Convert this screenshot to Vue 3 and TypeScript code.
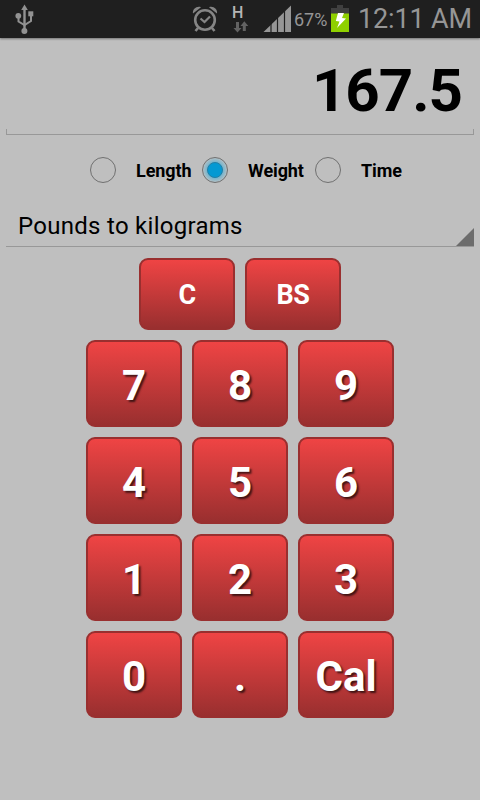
<script setup lang="ts">
import { ref } from 'vue'

type Unit = { label: string; key: string }

const units: Unit[] = [
  { label: 'Length', key: 'length' },
  { label: 'Weight', key: 'weight' },
  { label: 'Time', key: 'time' },
]
const rows: string[][] = [
  ['7', '8', '9'],
  ['4', '5', '6'],
  ['1', '2', '3'],
  ['0', '.', 'Cal'],
]
const selected = ref('weight')
const display = ref('167.5')

function press(key: string) {
  if (key === 'Cal') {
    display.value = String(Number((Number(display.value) * 0.45359237).toFixed(4)))
  } else if (key !== '.' || !display.value.includes('.')) {
    display.value += key
  }
}
</script>

<template>
  <div class="screen">
    <header class="status">
      <svg class="usb" width="20" height="32" viewBox="0 0 20 32">
        <g fill="none" stroke="#929292" stroke-width="2">
          <path d="M9.500 8V28" stroke-width="2.400" />
          <path d="M3.500 16V19.500L9.500 23L16 19V13" />
        </g>
        <g fill="#929292">
          <path d="M9.500 2.500L12.800 8H6.200Z" />
          <circle cx="3.300" cy="13.800" r="2.900" />
          <rect x="13.300" y="9.300" width="5" height="5" />
          <circle cx="9.400" cy="29" r="3" />
        </g>
      </svg>
      <svg class="alarm" width="26" height="28" viewBox="0 0 26 28">
        <g fill="none" stroke="#858585">
          <circle cx="13" cy="15" r="9.800" stroke-width="2.600" />
          <path d="M8.500 13.500L12.500 17L18 11.500" stroke-width="2.200" />
          <path d="M6 23L3.500 26M20 23L22.500 26" stroke-width="2.600" />
        </g>
        <path d="M1 8.500C0 4.500 5 .500 9 2.300ZM25 8.500C26 4.500 21 .500 17 2.300Z" fill="#858585" />
      </svg>
      <div class="network">
        <span class="net-label">H</span>
        <svg class="arrows" width="16" height="12" viewBox="0 0 16 12">
          <path d="M3 1h3v6h2.500L4.500 11.500L.500 7H3ZM9.800 10h3V5h2.500L11.300.300L7.500 5h2.300Z" fill="#626262" />
        </svg>
      </div>
      <svg class="signal" width="29" height="28" viewBox="0 0 29 28">
        <path d="M.500 27L28 .500V27Z" fill="#969696" />
        <path d="M8 18V28M14.500 12V28M21.500 5V28" stroke="#1f1f1f" stroke-width="1.200" />
      </svg>
      <span class="percent">67%</span>
      <svg class="battery" width="18" height="28" viewBox="0 0 18 28">
        <path d="M6 0h6v3h6v6H0V3h6Z" fill="#404040" />
        <path d="M0 8.500H18V27H0Z" fill="#8fd000" />
        <path d="M7 8H13L11 13L15 13.500L6 23L8.500 16.500L4.800 16Z" fill="#fff" />
      </svg>
      <span class="clock">12:11 AM</span>
    </header>

    <div class="display"><span>{{ display }}</span></div>

    <div class="units">
      <label v-for="u in units" :key="u.key" class="unit" :class="u.key" @click="selected = u.key">
        <span class="radio" :class="{ on: selected === u.key }"><i v-if="selected === u.key"></i></span>
        <span class="unit-label">{{ u.label }}</span>
      </label>
    </div>

    <div class="spinner">
      <span class="spinner-label">Pounds to kilograms</span>
      <svg class="corner" width="18" height="18" viewBox="0 0 18 18"><path d="M18 0V18H0Z" fill="#6c6c6c" /></svg>
    </div>

    <div class="pad">
      <div class="row">
        <button class="key small" @click="display = ''">C</button>
        <button class="key small" @click="display = display.slice(0, -1)">BS</button>
      </div>
      <div v-for="(row, i) in rows" :key="i" class="row">
        <button v-for="k in row" :key="k" class="key" @click="press(k)">{{ k }}</button>
      </div>
    </div>
  </div>
</template>

<style>
body {
  background: #bfbfbf;
}
</style>

<style scoped>
.screen {
  width: 480px;
  height: 800px;
  background: #bfbfbf;
  font-family: Roboto, sans-serif;
  color: #000;
  overflow: hidden;
}
.status {
  height: 38px;
  box-sizing: border-box;
  display: flex;
  align-items: flex-start;
  background: #1f1f1f;
  color: #969696;
  padding-left: 15px;
  box-shadow: 0 1px 2px rgba(0, 0, 0, 0.4);
  white-space: nowrap;
}
.usb { margin-top: 2px; }
.alarm { margin: 5px 0 0 157px; }
.network {
  display: flex;
  flex-direction: column;
  align-items: flex-start;
  width: 18px;
  margin: 5px 0 0 13px;
}
.net-label {
  margin-left: 1px;
  font-size: 16px;
  line-height: 16px;
  font-weight: 500;
  color: #b5b5b5;
}
.arrows { margin-left: 2px; }
.signal { margin: 5px 0 0 14px; }
.percent {
  width: 36px;
  margin: 9px 0 0 2px;
  font-size: 18px;
  line-height: 22px;
}
.battery { margin: 5px 0 0 1px; }
.clock {
  margin: 2px 0 0 9px;
  font-size: 27px;
  line-height: 34px;
  letter-spacing: -0.15px;
}
.display {
  height: 97px;
  margin: 0 6px;
  box-sizing: border-box;
  padding: 18px 12px 0 0;
  text-align: right;
  font-size: 60px;
  line-height: 70px;
  font-weight: 700;
  letter-spacing: -1px;
  border-bottom: 1px solid #989898;
  background:
    linear-gradient(#989898, #989898) left bottom / 1px 5px no-repeat,
    linear-gradient(#989898, #989898) right bottom / 1px 5px no-repeat;
}
.units {
  display: flex;
  height: 70px;
  padding-left: 90px;
  align-items: center;
}
.unit {
  display: flex;
  align-items: center;
  width: 112px;
}
.unit.weight { width: 113px; }
.radio {
  width: 26px;
  height: 26px;
  box-sizing: border-box;
  border: 1.5px solid #707070;
  border-radius: 50%;
  display: flex;
  align-items: center;
  justify-content: center;
}
.radio.on {
  background: radial-gradient(circle closest-side, #72b4ce 65%, #b2bfc4 100%);
}
.radio i {
  width: 16px;
  height: 16px;
  box-sizing: border-box;
  border: 1px solid #237fa5;
  border-radius: 50%;
  background: #0499d3;
}
.unit-label {
  margin: 2px 0 0 20px;
  font-size: 18px;
  line-height: 22px;
  font-weight: 700;
  letter-spacing: -0.1px;
}
.spinner {
  display: flex;
  justify-content: space-between;
  align-items: flex-end;
  height: 42px;
  box-sizing: border-box;
  margin: 0 6px;
  padding-left: 12px;
  border-bottom: 1px solid #989898;
}
.spinner-label {
  font-size: 24px;
  line-height: 30px;
  margin-bottom: 5px;
  letter-spacing: 0.28px;
}
.corner { display: block; }
.pad {
  display: flex;
  flex-direction: column;
  gap: 10px;
  padding-top: 11px;
}
.row {
  display: flex;
  justify-content: center;
  gap: 10px;
}
.key {
  width: 96px;
  height: 87px;
  box-sizing: border-box;
  border: 2px solid #992f2f;
  border-radius: 9px;
  background: linear-gradient(#ef4444, #992f2f);
  color: #fff;
  font: 700 42px/50px Roboto, sans-serif;
  text-shadow: 2px 2px 2px rgba(0, 0, 0, 0.65);
  padding: 5px 0 0;
}
.key.small {
  height: 72px;
  font-size: 27px;
  line-height: 32px;
  letter-spacing: -0.5px;
  text-shadow: none;
  padding-top: 1px;
}
</style>
